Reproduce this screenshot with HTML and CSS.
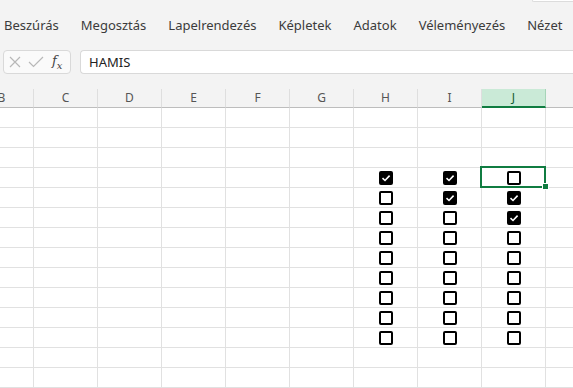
FILE: index.html
```html
<!DOCTYPE html>
<html lang="hu">
<head>
    <meta charset="UTF-8">
    <title>Munkafüzet</title>
    <link rel="stylesheet" href="styles.css">
</head>
<body>
<div class="topStrip"><div class="searchEdge"></div></div>
<div class="tabs">
    <span class="tab">Beszúrás</span>
    <span class="tab">Megosztás</span>
    <span class="tab">Lapelrendezés</span>
    <span class="tab">Képletek</span>
    <span class="tab">Adatok</span>
    <span class="tab">Véleményezés</span>
    <span class="tab">Nézet</span>
</div>
<div class="formulaBar">
    <div class="fxBox">
        <svg class="fxIcon" width="14" height="14" viewBox="0 0 14 14"><path d="M2 2 L12 12 M12 2 L2 12" stroke="#b8b8b8" stroke-width="1.2" fill="none"/></svg>
        <svg class="fxIcon" width="16" height="14" viewBox="0 0 16 14"><path d="M1 7 L5.5 11.5 L15 2" stroke="#b8b8b8" stroke-width="1.2" fill="none"/></svg>
        <span class="fx">f<sub>x</sub></span>
    </div>
    <div class="formulaInput">HAMIS</div>
</div>
<div class="sheet" id="sheet"></div>

<script>
    var cols = ["B", "C", "D", "E", "F", "G", "H", "I", "J", "K"];
    // checked state for H, I, J on rows 4..12
    var boxes = {
        4: [1, 1, 0],
        5: [0, 1, 1],
        6: [0, 0, 1]
    };
    var check = '<svg width="10" height="10" viewBox="0 0 10 10"><path d="M1.5 5.2 L4 7.5 L8.6 2.6" stroke="#fff" stroke-width="1.6" fill="none"/></svg>';
    var sheet = document.getElementById("sheet");

    cols.forEach(function (c) {
        var h = document.createElement("div");
        h.className = "colHead" + (c === "J" ? " activeHead" : "");
        h.textContent = c === "K" ? "" : c;
        sheet.append(h);
    });

    for (var r = 1; r <= 14; r++) {
        cols.forEach(function (c, i) {
            var cell = document.createElement("div");
            cell.className = "cell";
            if (r >= 4 && r <= 12 && i >= 6 && i <= 8) {
                var state = boxes[r] ? boxes[r][i - 6] : 0;
                var box = document.createElement("span");
                box.className = "checkbox" + (state ? " checked" : "");
                if (state) box.innerHTML = check;
                cell.append(box);
            }
            if (r === 4 && c === "J") {
                cell.classList.add("selected");
            }
            sheet.append(cell);
        });
    }
</script>
</body>
</html>
```

FILE: styles.css
```css
html, body {
    margin: 0;
    background: #f3f3f3;
    font-family: "Noto Sans", "Open Sans", sans-serif;
    overflow: hidden;
}

.topStrip {
    height: 2px;
    display: flex;
    justify-content: flex-end;
}

.searchEdge {
    width: 40px;
    height: 1px;
    background: #fff;
    border-left: 1px solid #dcdcdc;
    border-bottom: 1px solid #dcdcdc;
    border-bottom-left-radius: 4px;
}

.tabs {
    height: 42px;
    display: flex;
    align-items: center;
    gap: 22px;
    padding-left: 4px;
    padding-top: 3px;
    box-sizing: border-box;
    font-size: 13px;
    color: #3b3b3b;
    white-space: nowrap;
}

.formulaBar {
    height: 44px;
    display: flex;
    gap: 9px;
    padding: 6px 0 0 3px;
    box-sizing: border-box;
}

.fxBox {
    width: 68px;
    height: 24px;
    box-sizing: border-box;
    background: #fafafa;
    border: 1px solid #d9d9d9;
    border-radius: 4px;
    display: flex;
    align-items: center;
    gap: 6px;
    padding-left: 4px;
}

.fx {
    font-family: "DejaVu Serif", serif;
    font-style: italic;
    font-size: 13px;
    color: #444;
    margin-left: 2px;
    line-height: 1;
}

.fx sub {
    font-size: 10px;
}

.formulaInput {
    flex: 1;
    height: 24px;
    box-sizing: border-box;
    background: #fff;
    border: 1px solid #d9d9d9;
    border-right: none;
    border-radius: 4px 0 0 4px;
    font-size: 13px;
    color: #222;
    line-height: 22px;
    padding-left: 8px;
}

.sheet {
    display: grid;
    grid-template-columns: repeat(10, 64px);
    grid-auto-rows: 20px;
    grid-template-rows: 19px;
    margin-top: 1px;
    margin-left: -30px;
    background: #fff;
}

.colHead {
    background: #f3f3f3;
    border-right: 1px solid #dedede;
    border-bottom: 1px solid #bdbdbd;
    box-sizing: border-box;
    font-size: 12px;
    color: #555;
    text-align: center;
    line-height: 18px;
}

.activeHead {
    background: #caead7;
    color: #0f5c32;
    border-right-color: #a6d4b8;
    border-bottom: 2px solid #107c41;
    line-height: 17px;
}

.cell {
    position: relative;
    border-right: 1px solid #e1e1e1;
    border-bottom: 1px solid #e1e1e1;
    box-sizing: border-box;
    display: flex;
    align-items: center;
    justify-content: center;
}

.checkbox {
    width: 14px;
    height: 14px;
    box-sizing: border-box;
    border: 2px solid #000;
    border-radius: 2px;
    background: #fff;
    display: flex;
    align-items: center;
    justify-content: center;
}

.checked {
    background: #000;
}

.selected::after {
    content: "";
    position: absolute;
    left: -2px;
    top: -2px;
    right: -1px;
    bottom: -1px;
    border: 2px solid #107c41;
}

.selected::before {
    content: "";
    position: absolute;
    right: -4px;
    bottom: -3px;
    width: 5px;
    height: 5px;
    background: #107c41;
    border: 1px solid #fff;
    z-index: 1;
}
```
